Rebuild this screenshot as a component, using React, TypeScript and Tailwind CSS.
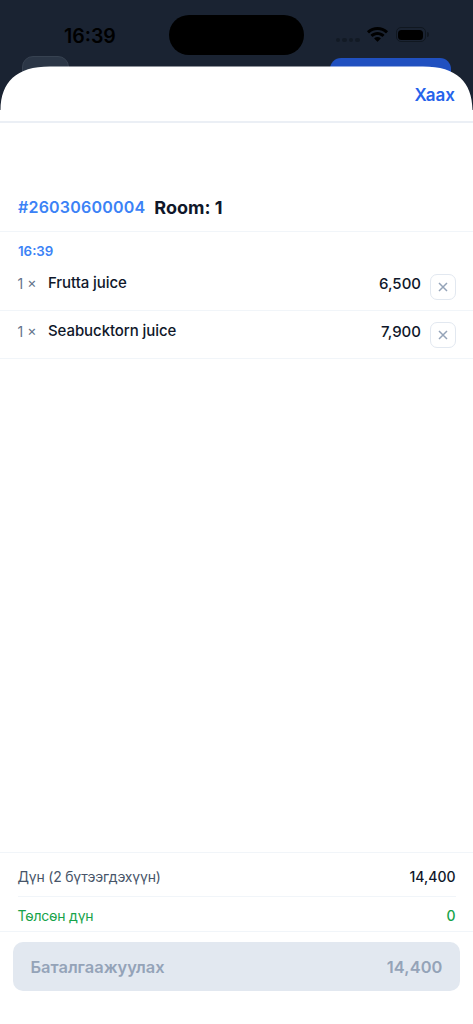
import type { ReactNode } from "react";

const items = [
  { qty: 1, name: "Frutta juice", price: "6,500" },
  { qty: 1, name: "Seabucktorn juice", price: "7,900" },
];

const StatusBar = () => (
  <div className="flex h-[71px] items-start pl-[64px] text-black">
    <span className="mt-[22px] w-[105px] text-[19.5px] leading-[29px] font-semibold">
      16:39
    </span>
    <div className="mt-[15px] h-[40px] w-[135px] rounded-full bg-black" />
    <div className="mt-[38px] ml-[32px] flex gap-[2px]">
      {[0, 1, 2, 3].map((dot) => (
        <i key={dot} className="size-[4.4px] rounded-full bg-[#121a25]" />
      ))}
    </div>
    <svg className="mt-[27px] ml-[7px]" width="21" height="15" viewBox="0 0 17 12.2">
      <path d="M8.5 2.4c2.5 0 4.8.9 6.6 2.6.1.1.3.1.5 0l1.3-1.3c.1-.1.1-.4 0-.5C12.2-1 4.8-1 .1 3.2c-.1.1-.1.4 0 .5L1.4 5c.1.1.4.1.5 0 1.8-1.7 4.1-2.6 6.6-2.6Z" />
      <path d="M8.5 6.6c1.4 0 2.7.5 3.7 1.4.1.1.4.1.5 0L14 6.7c.1-.1.1-.4 0-.5-3.1-2.9-7.9-2.9-11 0-.1.1-.1.4 0 .5L4.3 8c.1.1.4.1.5 0 1-.9 2.3-1.4 3.7-1.4Z" />
      <path d="M11 9.5c.2-.1.2-.4 0-.5-1.4-1.2-3.6-1.2-5 0-.2.1-.2.4 0 .5l2.2 2.3c.2.2.4.2.6 0L11 9.5Z" />
    </svg>
    <div className="mt-[27px] ml-[8px] flex items-center gap-px">
      <div className="h-[15px] w-[30px] rounded-[5px] border border-[#101720] p-[1.5px]">
        <div className="h-full rounded-[3.5px] bg-black" />
      </div>
      <i className="h-[5px] w-[2px] rounded-r-full bg-[#101720]" />
    </div>
  </div>
);

const SummaryRow = ({ children }: { children: ReactNode }) => (
  <div className="flex justify-between text-[14px] leading-5">{children}</div>
);

export default function App() {
  return (
    <div className="relative h-[1024px] w-[473px] overflow-hidden bg-[#1a2332] font-['Inter','Liberation_Sans',sans-serif]">
      <StatusBar />
      <div className="absolute top-[56px] left-[22px] h-[40px] w-[47px] rounded-[11px] border border-[#374251] bg-[#2b3646]" />
      <div className="absolute top-[58px] left-[330px] h-[40px] w-[121px] rounded-[11px] bg-[#2050c0]" />

      <main className="absolute inset-x-0 top-[66px] bottom-0 flex flex-col bg-white [clip-path:path('M0_958V44H0.5C1_16_16_0.5_50_0.5H423C457_0.5_472_16_472.5_44H473V958Z')]">
        <header className="flex h-[57px] shrink-0 items-center justify-end border-b-2 border-[#ebeff5] pr-[18px]">
          <button className="pt-[4px] text-[17px] font-semibold text-[#2563eb]">Хаах</button>
        </header>

        <div className="mt-[60px] flex h-[49px] shrink-0 items-center gap-[9px] border-b border-[#f1f5f9] px-[18px]">
          <span className="text-[16px] font-semibold tracking-[0.2px] text-[#3b82f6]">#26030600004</span>
          <span className="text-[18px] font-bold text-[#0f172a]">Room: 1</span>
        </div>

        <p className="mt-[10px] px-[18px] text-[13.3px] leading-[18px] font-semibold text-[#3b82f6]">
          16:39
        </p>
        <ul className="mt-[3px]">
          {items.map((item) => (
            <li
              key={item.name}
              className="flex h-[48px] items-start border-b border-[#f1f5f9] pt-[10px] pr-[17.5px] pl-[17.5px] text-[15px] leading-5"
            >
              <span className="w-[30.5px] pt-px text-[14px] text-[#64748b]">{item.qty} ×</span>
              <span className="flex-1 font-medium tracking-[-0.08px] text-[#0f172a]">{item.name}</span>
              <span className="mt-px mr-[8.5px] font-medium text-[#0f172a]">{item.price}</span>
              <button className="mt-[0.5px] flex size-[26px] items-center justify-center rounded-[7px] border border-[#e2e8f0] text-[#94a3b8]">
                <svg width="10" height="10" viewBox="0 0 10 10" stroke="currentColor" strokeWidth="1.5">
                  <path d="m1 1 8 8M9 1 1 9" />
                </svg>
              </button>
            </li>
          ))}
        </ul>

        <footer className="mt-auto h-[172px] shrink-0 border-t border-[#f1f5f9]">
          <div className="px-[17.5px]">
            <div className="h-[44px] border-b border-[#f1f5f9] pt-[14px]">
              <SummaryRow>
                <span className="tracking-[-0.2px] text-[#475569]">Дүн (2 бүтээгдэхүүн)</span>
                <span className="font-medium text-[#0f172a]">14,400</span>
              </SummaryRow>
            </div>
            <div className="h-[34px] pt-[9px] text-[#16a34a]">
              <SummaryRow>
                <span className="tracking-[-0.2px]">Төлсөн дүн</span>
                <span className="font-medium">0</span>
              </SummaryRow>
            </div>
          </div>
          <div className="border-t border-[#f1f5f9] px-[13px] pt-[10px]">
            <button className="flex h-[49px] w-full items-center justify-between rounded-[10px] bg-[#e2e8f0] px-[17.5px] pt-px text-[16.4px] font-semibold text-[#94a3b8]">
              <span>Баталгаажуулах</span>
              <span className="tracking-[0.1px]">14,400</span>
            </button>
          </div>
        </footer>
      </main>
    </div>
  );
}
